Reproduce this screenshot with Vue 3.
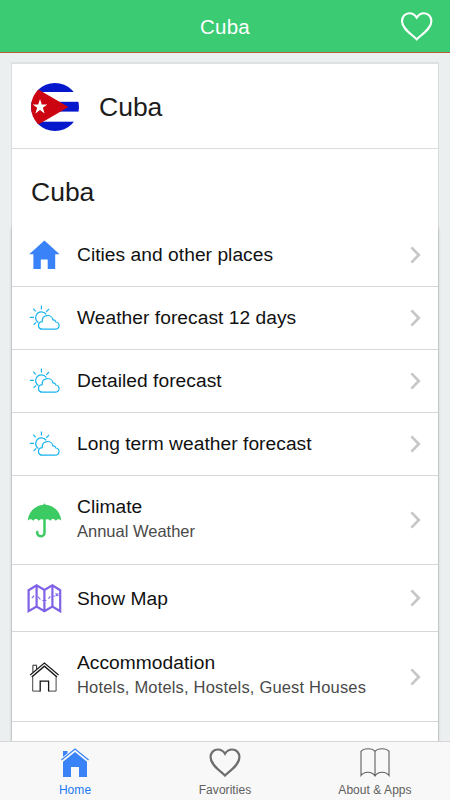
<script setup>
const rows = [
  { title: 'Cities and other places', icon: 'home', size: 'normal' },
  { title: 'Weather forecast 12 days', icon: 'weather', size: 'normal' },
  { title: 'Detailed forecast', icon: 'weather', size: 'normal' },
  { title: 'Long term weather forecast', icon: 'weather', size: 'normal' },
  { title: 'Climate', sub: 'Annual Weather', icon: 'umbrella', size: 'climate' },
  { title: 'Show Map', icon: 'map', size: 'map' },
  { title: 'Accommodation', sub: 'Hotels, Motels, Hostels, Guest Houses', icon: 'house', size: 'stay' }
]
</script>

<template>
  <div class="screen">
    <header class="bar">
      <h1 class="bar-title">Cuba</h1>
      <svg class="bar-heart" width="34" height="32" viewBox="0 0 34 32">
        <path d="M16.7 28.4 C12.5 23.8 2 18 2 10.3 C2 5.7 5.2 2.3 9.4 2.3 C12.8 2.3 15.2 4.2 16.7 6.6 C18.2 4.2 20.6 2.3 24 2.3 C28.2 2.3 31.4 5.7 31.4 10.3 C31.4 18 20.9 23.8 16.7 28.4 Z" fill="none" stroke="#fff" stroke-width="2.1" />
      </svg>
    </header>

    <main class="content">
      <div class="card">
        <div class="country">
          <svg class="flag" width="48" height="48" viewBox="0 0 48 48">
            <defs><clipPath id="disc"><circle cx="24" cy="24" r="24" /></clipPath></defs>
            <g clip-path="url(#disc)">
              <rect width="48" height="48" fill="#fff" />
              <rect width="48" height="9" fill="#0618cc" />
              <rect y="18.8" width="48" height="9.8" fill="#0618cc" />
              <rect y="38.7" width="48" height="10" fill="#0618cc" />
              <path d="M-4 0 L37.5 24 L-4 48 Z" fill="#cc0310" />
              <path d="M9 16 L10.8 21.5 L16.3 21.5 L11.9 24.8 L13.6 30.4 L9 27 L4.4 30.4 L6.1 24.8 L1.7 21.5 L7.2 21.5 Z" fill="#fff" />
            </g>
          </svg>
          <h2 class="country-name">Cuba</h2>
        </div>
        <h2 class="heading">Cuba</h2>
        <ul class="list">
          <li v-for="row in rows" :key="row.title" class="row" :class="row.size">
            <svg class="icon" width="40" height="40" viewBox="0 0 40 40">
              <path v-if="row.icon === 'home'" d="M20.4 5.5 L35.6 19.3 H31.2 V34 H23.7 V24.6 H16.8 V34 H9.4 V19.3 H5.2 Z" fill="#3a82f7" />
              <g v-else-if="row.icon === 'weather'" transform="translate(.4 1.4)" fill="none" stroke="#17b3ee" stroke-width="1.2">
                <path d="M17 6.2 V10.2 M5.5 18 H9.5 M8.9 9.2 L11.3 11.9 M24.6 9.6 L21.8 12.4 M9.2 25.5 L11.8 22.9" />
                <path d="M14 23.2 C9 19.4 11.6 12.5 16.9 12.4 C19.4 12.4 20.8 13.4 21.9 15" />
                <path d="M18.3 29.8 C12.8 29.8 12.7 22.8 17.8 22.2 C17.2 14.6 27.7 14.2 28.5 20.5 C30.6 20.2 31.2 21.3 31.4 22.6 C36 23.2 35.8 29.8 30.6 29.8 Z" />
              </g>
              <g v-else-if="row.icon === 'umbrella'" transform="translate(.5 0)">
                <path d="M3.2 20.4 C4.2 11.2 11.4 5 19 4.7 C19.2 3.1 20.8 3.1 21 4.7 C28.8 5 35.7 11.2 36.8 20.4 C34.6 18.6 32.5 18.8 31.3 21 C29.8 18.6 27.4 18.4 25.8 20.7 C24.6 19.2 23.2 18.8 21.6 19.4 H18.5 C17 18.8 15.3 19.2 14.2 20.7 C12.5 18.4 10.2 18.6 8.7 21 C7.5 18.8 5.4 18.6 3.2 20.4 Z" fill="#3ccb63" />
                <path d="M20 18 V32.5 C20 37.6 12.6 37.5 12.7 32" fill="none" stroke="#3ccb63" stroke-width="2.5" stroke-linecap="round" />
              </g>
              <g v-else-if="row.icon === 'map'" transform="translate(.4 0)" fill="none" stroke="#7f62e6">
                <path d="M4.2 12.2 L12.2 7.2 L20 12 L28 7.2 L35.8 12.2 V33.2 L28 28.6 L20 33.2 L12.2 28.6 L4.2 33.2 Z M12.2 7.2 V28.6 M20 12 V33.2 M28 7.2 V28.6" stroke-width="2.2" />
                <path d="M7.5 20 L9.7 17.7 M13.5 18.5 L16 21.5 M18 22.5 H22 M24 20.6 L26 18.4 M29 18 H30.5 M31.2 15.4 L34 18.2 M34 15.4 L31.2 18.2" stroke-width="1.1" />
              </g>
              <g v-else transform="translate(.4 0)" fill="none" stroke="#151515">
                <path d="M5.8 18 L20 6 L34.2 18" stroke-width="1.1" />
                <path d="M7.4 20 L20 9.2 L32.6 20" stroke-width="1.4" />
                <path d="M8.5 15 V8.2 H12.2 V12" stroke-width=".9" />
                <path d="M8.3 18.7 V34.1 H15.8 M31.7 18.7 V34.1 H24.4" stroke-width=".9" stroke="#333" />
                <path d="M15.8 34.4 V24.2 H24.2 V34.4" stroke-width="1.3" />
              </g>
            </svg>
            <div class="text">
              <div class="title">{{ row.title }}</div>
              <div v-if="row.sub" class="sub">{{ row.sub }}</div>
            </div>
            <svg class="chevron" width="12" height="18" viewBox="0 0 12 18">
              <path d="M1.4 1.4 L8.8 9 L1.4 16.6" fill="none" stroke="#c7c7c9" stroke-width="2.7" />
            </svg>
          </li>
          <li class="row normal"></li>
        </ul>
      </div>
    </main>

    <nav class="tabs">
      <a class="tab active">
        <svg width="36" height="34" viewBox="0 0 36 34">
          <path d="M6 12 V4 H10.5 V8 L6 12 Z M6 14.7 L18 5 L30 14.7 V30 H22 V20 H14 V30 H6 Z" fill="#3a82f7" />
          <path d="M4.4 13 L18 2.4 L31.6 13" fill="none" stroke="#f8f8f8" stroke-width="3" />
          <path d="M4.4 13 L18 2 L31.6 13" fill="none" stroke="#3a82f7" stroke-width="1.2" />
        </svg>
        <span>Home</span>
      </a>
      <a class="tab">
        <svg width="36" height="34" viewBox="0 0 36 34">
          <path d="M18 28.6 C14 24.4 3.6 18 3.6 10.2 C3.6 5.6 6.7 2.5 10.8 2.5 C14.2 2.5 16.6 4.4 18 6.8 C19.4 4.4 21.8 2.5 25.2 2.5 C29.3 2.5 32.4 5.6 32.4 10.2 C32.4 18 22 24.4 18 28.6 Z" fill="none" stroke="#6e6e6e" stroke-width="2.2" />
        </svg>
        <span>Favorities</span>
      </a>
      <a class="tab">
        <svg width="36" height="34" viewBox="0 0 36 34">
          <path d="M18 4.4 C15.5 .8 6.5 .8 4 4.4 V28.5 C7 24 15 24 18 29 C21 24 29 24 32 28.5 V4.4 C29.5 .8 20.5 .8 18 4.4 Z M18 4.4 V29" fill="none" stroke="#606060" stroke-width="1.1" />
        </svg>
        <span>About &amp; Apps</span>
      </a>
    </nav>
  </div>
</template>

<style>
body {
  margin: 0;
}
</style>

<style scoped>
.screen {
  display: flex;
  flex-direction: column;
  width: 450px;
  height: 800px;
  overflow: hidden;
  background: #ebeff0;
  color: #1c1c1c;
  font-family: "Liberation Sans", Arial, sans-serif;
}
.bar {
  display: grid;
  grid-template-columns: 50px 1fr 50px;
  align-items: center;
  flex: none;
  box-sizing: border-box;
  height: 53px;
  background: #3acb73;
  border-bottom: 1px solid #b75c37;
}
.bar-title {
  grid-column: 2;
  margin: 2px 0 0;
  text-align: center;
  color: #fff;
  font-size: 20.5px;
  font-weight: 400;
  letter-spacing: 0.2px;
}
.bar-heart {
  margin-top: 1px;
}
.content {
  flex: 1;
  min-height: 0;
  overflow: hidden;
  padding: 9px 11px 0;
}
.card {
  box-sizing: border-box;
  width: 428px;
  border: 1px solid #d9dcdd;
  border-top: 2px solid #dfe1e2;
  background: #fff;
}
.country {
  display: flex;
  align-items: center;
  gap: 20px;
  box-sizing: border-box;
  height: 85px;
  padding: 2px 19px 0;
  border-bottom: 1px solid #dcdcdc;
}
.country-name,
.heading {
  margin: 0;
  font-size: 26.5px;
  font-weight: 400;
}
.heading {
  height: 75px;
  padding-left: 19px;
  line-height: 87px;
}
.list {
  margin: 0;
  padding: 0;
  list-style: none;
  box-shadow: 0 4px 3px rgba(0, 0, 0, 0.24);
}
.row {
  display: flex;
  align-items: center;
  box-sizing: border-box;
  height: 63px;
  padding: 0 16px 0 12px;
  border-bottom: 1px solid #d8d8d8;
  background: #fff;
}
.climate {
  height: 89px;
}
.map {
  height: 67px;
}
.stay {
  height: 90px;
}
.icon {
  flex: none;
  margin-right: 13px;
}
.text {
  flex: 1;
  white-space: nowrap;
}
.title {
  font-size: 19.2px;
  line-height: 24px;
  letter-spacing: 0.04px;
  color: #111;
}
.map .title {
  padding-top: 2px;
}
.sub {
  margin-top: 1px;
  padding-bottom: 3px;
  font-size: 16.5px;
  line-height: 22px;
  letter-spacing: 0.18px;
  color: #4a4a4a;
}
.climate .sub {
  letter-spacing: 0;
}
.stay .text {
  padding-bottom: 2px;
}
.chevron {
  flex: none;
}
.tabs {
  display: grid;
  grid-template-columns: repeat(3, 1fr);
  flex: none;
  box-sizing: border-box;
  height: 59px;
  padding-top: 5px;
  border-top: 1px solid #d6d6d6;
  background: #f8f8f8;
}
.tab {
  display: flex;
  flex-direction: column;
  align-items: center;
  gap: 2px;
  color: #606060;
  font-size: 12px;
  line-height: 14px;
  letter-spacing: 0.05px;
}
.active {
  color: #1c78f2;
}
</style>
